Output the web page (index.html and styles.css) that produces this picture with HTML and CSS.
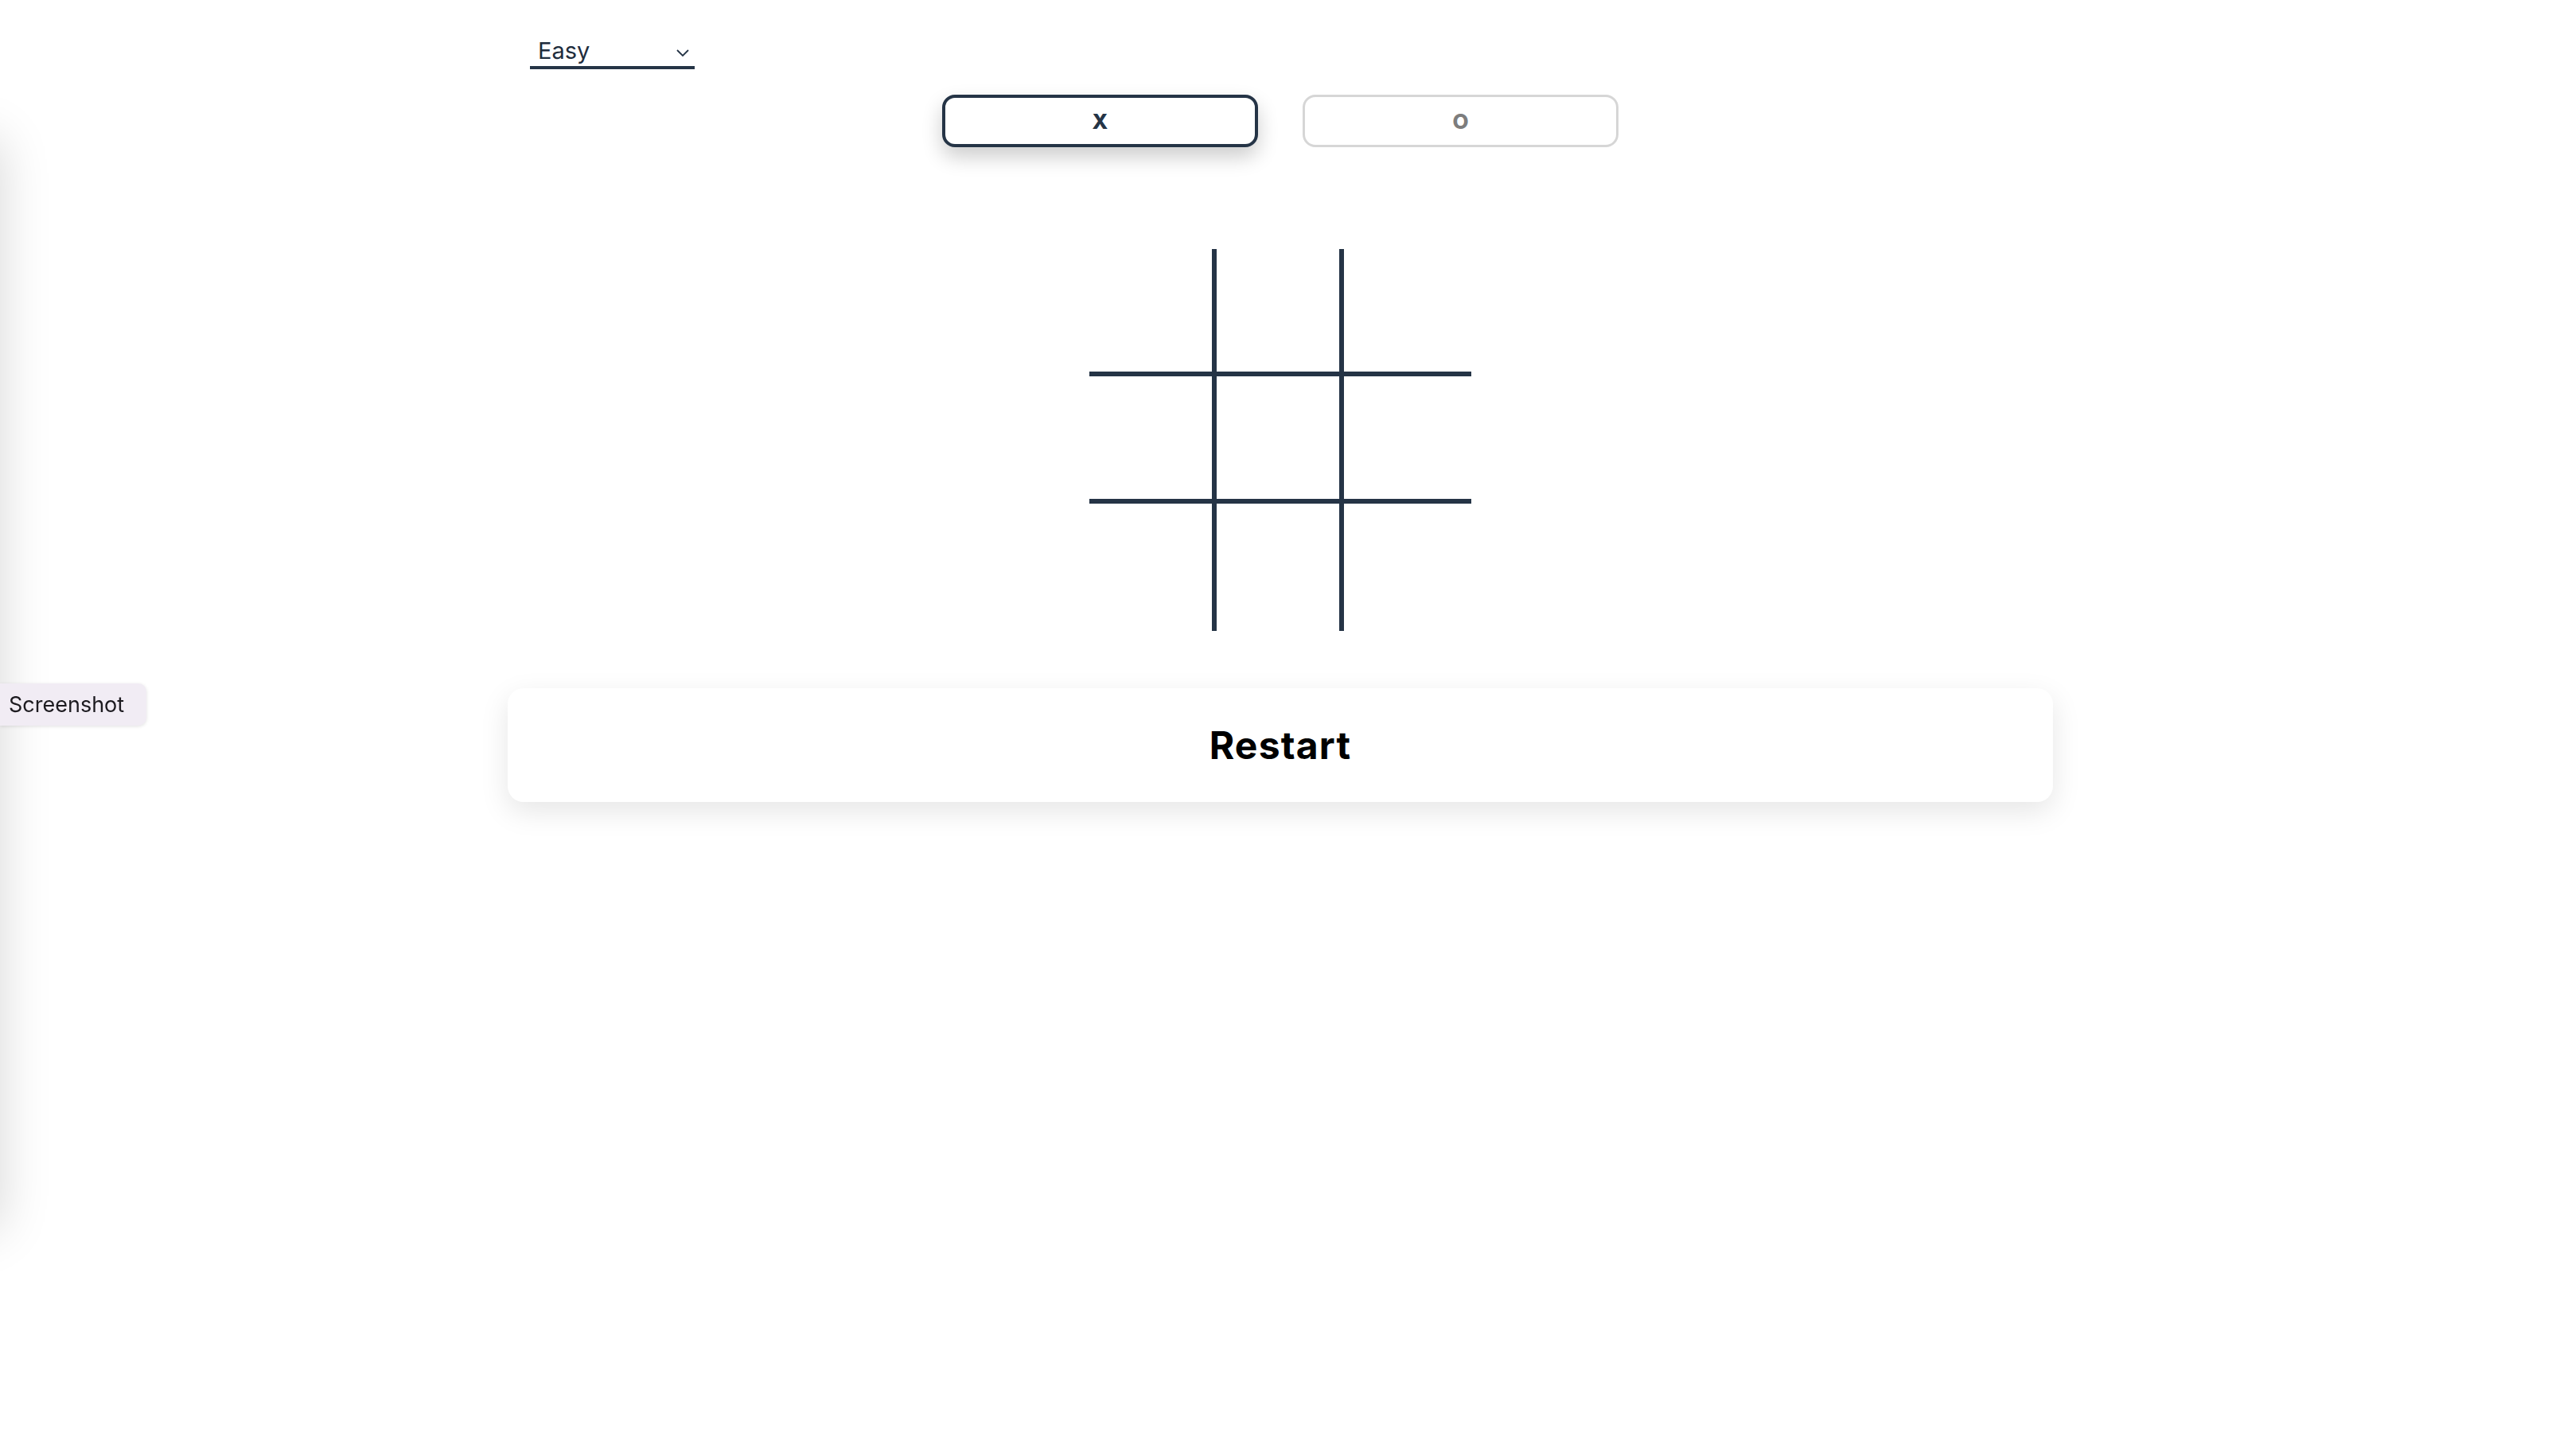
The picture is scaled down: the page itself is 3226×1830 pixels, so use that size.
FILE: index.html
```html
<!DOCTYPE html>
<html lang="en">
<head>
<meta charset="utf-8">
<title>Tic Tac Toe</title>
<link rel="stylesheet" href="styles.css">
</head>
<body>
<div class="drawer-shadow"></div>
<main class="app">
  <header class="header">
    <div class="select">
      <span class="select-value">Easy</span>
      <svg class="chevron" width="16" height="9" viewBox="0 0 16 9"><path d="M1 1 L8 8 L15 1" fill="none" stroke="#253446" stroke-width="1.8"/></svg>
    </div>
  </header>
  <section class="players">
    <button class="player active">X</button>
    <button class="player">O</button>
  </section>
  <section class="board">
    <div class="cell r c"></div><div class="cell r c"></div><div class="cell r"></div>
    <div class="cell r c"></div><div class="cell r c"></div><div class="cell r"></div>
    <div class="cell c"></div><div class="cell c"></div><div class="cell"></div>
  </section>
  <button class="restart">Restart</button>
</main>
<button class="screenshot">Screenshot</button>
</body>
</html>
```
FILE: styles.css
```css
* { box-sizing: border-box; }
html, body { margin: 0; padding: 0; background: #ffffff; }
body {
  padding-right: 8px;
  font-family: Inter, "Noto Sans", sans-serif;
  color: #253446;
  min-height: 1830px;
  overflow: hidden;
}
.drawer-shadow {
  position: fixed;
  left: -500px;
  top: 175px;
  width: 500px;
  height: 1370px;
  background: #fff;
  box-shadow: 0 0 60px rgba(0,0,0,0.16);
}
.app {
  max-width: 1942px;
  margin: 0 auto;
}
.header {
  padding: 47px 0 0 28px;
}
.select {
  width: 207px;
  display: flex;
  align-items: center;
  justify-content: space-between;
  padding: 0 7px 2px 10px;
  border-bottom: 4px solid #253446;
}
.select-value {
  font-size: 29px;
  line-height: 34px;
  font-weight: 400;
  color: #1f2d3d;
}
.chevron { margin-top: 4px; }
.players {
  display: flex;
  justify-content: center;
  gap: 56px;
  margin-top: 32px;
}
.player {
  width: 397px;
  height: 66px;
  background: #fff;
  border: 3px solid #d6d6d6;
  border-radius: 16px;
  font-family: Inter, sans-serif;
  font-size: 26px;
  font-weight: 800;
  color: #7d7d7d;
  padding: 0;
}
.player.active {
  border: 4px solid #253446;
  color: #253446;
  box-shadow: 0 12px 26px rgba(0,0,0,0.2);
}
.board {
  display: grid;
  grid-template-columns: repeat(3, 160px);
  grid-template-rows: repeat(3, 160px);
  width: 480px;
  margin: 128px auto 0;
}
.cell { background: #fff; }
.cell.c { border-right: 6px solid #253446; }
.cell.r { border-bottom: 6px solid #253446; }
.restart {
  display: block;
  width: 100%;
  height: 143px;
  margin-top: 72px;
  border: none;
  border-radius: 20px;
  background: #fff;
  box-shadow: 0 12px 36px rgba(0,0,0,0.1);
  font-family: Inter, sans-serif;
  font-size: 48px;
  font-weight: 700;
  color: #000;
  letter-spacing: 1.2px;
}
.screenshot {
  position: fixed;
  left: 0;
  top: 859px;
  width: 184px;
  height: 53px;
  border: none;
  border-radius: 0 10px 10px 0;
  background: #f1ecf4;
  box-shadow: 0 1px 4px rgba(0,0,0,0.12);
  font-family: Inter, sans-serif;
  font-size: 27px;
  color: #1d1b20;
  text-align: left;
  padding: 0 0 0 11px;
}
```
